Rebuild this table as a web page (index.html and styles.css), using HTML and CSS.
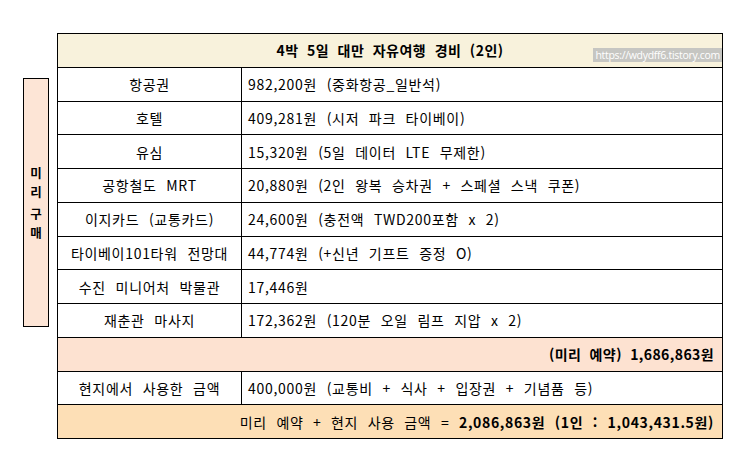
FILE: index.html
```html
<!DOCTYPE html>
<html lang="ko">
<head>
<meta charset="utf-8">
<link rel="stylesheet" href="styles.css">
</head>
<body>
<div class="page">
  <div class="side">
    <div class="side-word"><span>미</span><span>리</span></div>
    <div class="side-word"><span>구</span><span>매</span></div>
  </div>
  <div class="sheet">
    <div class="row head">
      <div class="cell full center bold">4박 5일 대만 자유여행 경비 (2인)</div>
      <span class="watermark">https://wdydff6.tistory.com</span>
    </div>
    <div class="row"><div class="cell name">항공권</div><div class="cell value">982,200원 (중화항공_일반석)</div></div>
    <div class="row"><div class="cell name">호텔</div><div class="cell value">409,281원 (시저 파크 타이베이)</div></div>
    <div class="row"><div class="cell name">유심</div><div class="cell value">15,320원 (5일 데이터 LTE 무제한)</div></div>
    <div class="row"><div class="cell name">공항철도 MRT</div><div class="cell value">20,880원 (2인 왕복 승차권 + 스페셜 스낵 쿠폰)</div></div>
    <div class="row"><div class="cell name">이지카드 (교통카드)</div><div class="cell value">24,600원 (충전액 TWD200포함 x 2)</div></div>
    <div class="row"><div class="cell name">타이베이101타워 전망대</div><div class="cell value">44,774원 (+신년 기프트 증정 O)</div></div>
    <div class="row"><div class="cell name">수진 미니어처 박물관</div><div class="cell value">17,446원</div></div>
    <div class="row"><div class="cell name">재춘관 마사지</div><div class="cell value">172,362원 (120분 오일 림프 지압 x 2)</div></div>
    <div class="row subtotal"><div class="cell full right bold">(미리 예약) 1,686,863원</div></div>
    <div class="row"><div class="cell name">현지에서 사용한 금액</div><div class="cell value">400,000원 (교통비 + 식사 + 입장권 + 기념품 등)</div></div>
    <div class="row total"><div class="cell full right"><span>미리 예약 + 현지 사용 금액 =&nbsp;</span><b>2,086,863원 (1인 : 1,043,431.5원)</b></div></div>
  </div>
</div>
</body>
</html>
```
FILE: styles.css
```css
* { box-sizing: border-box; }
html, body { margin: 0; padding: 0; background: #fff; }
body {
  font-family: "Noto Sans CJK KR", "Noto Sans", sans-serif;
  font-size: 14px;
  color: #000;
}
.page {
  display: flex;
  align-items: flex-start;
  gap: 8px;
  padding: 33px 0 0 23px;
}
.side {
  width: 26px;
  height: 249px;
  margin-top: 45px;
  background: #fde5d6;
  border: 1.5px solid #000;
  display: flex;
  flex-direction: column;
  align-items: center;
  justify-content: center;
  gap: 3px;
  font-weight: bold;
  font-size: 12.5px;
}
.side-word {
  display: flex;
  flex-direction: column;
  align-items: center;
}
.side-word span {
  display: block;
  height: 19px;
  line-height: 19px;
}
.sheet {
  width: 666px;
  border-top: 1.5px solid #000;
  border-left: 1.5px solid #000;
}
.row {
  display: grid;
  grid-template-columns: 184px 1fr;
  height: 33.75px;
  position: relative;
}
.cell {
  border-right: 1.5px solid #000;
  border-bottom: 1.5px solid #000;
  display: flex;
  align-items: center;
  white-space: nowrap;
  letter-spacing: 0.7px;
  word-spacing: 5px;
}
.name { justify-content: center; }
.value { padding-left: 6px; }
.full { grid-column: 1 / -1; }
.center { justify-content: center; }
.right { justify-content: flex-end; padding-right: 8px; }
.bold, b { font-weight: bold; }
.head .cell { background: #f8f2dc; letter-spacing: 0.5px; word-spacing: 4px; }
.subtotal .cell { background: #fde2d1; letter-spacing: 0.4px; word-spacing: 4px; }
.total .cell { background: #fddfb6; letter-spacing: 0.65px; word-spacing: 5px; }
.watermark {
  position: absolute;
  right: 1px;
  top: 14px;
  background: #c6c6c2;
  color: #fff;
  font-family: "Open Sans", "DejaVu Sans", sans-serif;
  font-size: 10.5px;
  line-height: 14px;
  padding: 0 2px;
  letter-spacing: -0.3px;
}
```
